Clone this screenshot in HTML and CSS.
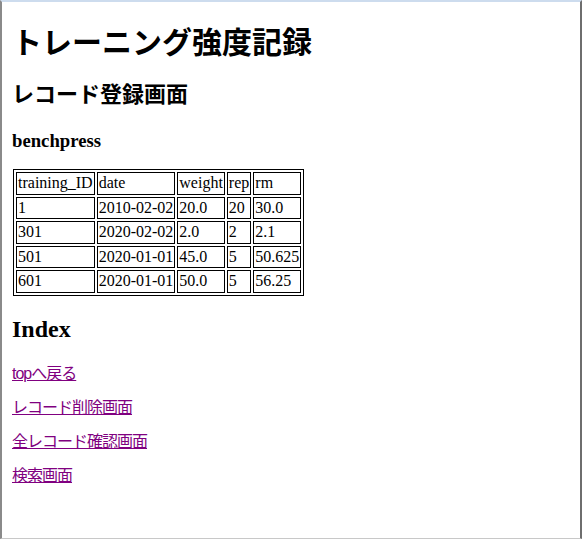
FILE: index.html
```html
<!DOCTYPE html>
<html lang="ja">
<head>
<meta charset="utf-8">
<title>トレーニング強度記録</title>
<link rel="stylesheet" href="styles.css">
</head>
<body>
<h1 class="title">トレーニング強度記録</h1>
<h2 class="subtitle">レコード登録画面</h2>
<h3 class="exercise">benchpress</h3>
<table class="records" border="1">
  <tr><td>training_ID</td><td>date</td><td>weight</td><td>rep</td><td>rm</td></tr>
  <tr><td>1</td><td>2010-02-02</td><td>20.0</td><td>20</td><td>30.0</td></tr>
  <tr><td>301</td><td>2020-02-02</td><td>2.0</td><td>2</td><td>2.1</td></tr>
  <tr><td>501</td><td>2020-01-01</td><td>45.0</td><td>5</td><td>50.625</td></tr>
  <tr><td>601</td><td>2020-01-01</td><td>50.0</td><td>5</td><td>56.25</td></tr>
</table>
<h2 class="index-title">Index</h2>
<p class="nav"><a href="#top">topへ戻る</a></p>
<p class="nav"><a href="#delete">レコード削除画面</a></p>
<p class="nav"><a href="#all">全レコード確認画面</a></p>
<p class="nav"><a href="#search">検索画面</a></p>
</body>
</html>
```
FILE: styles.css
```css
html {
  box-sizing: border-box;
  min-height: 100vh;
  border-top: 2px solid #cddcee;
  border-left: 2px solid #8a8a8a;
  border-right: 2px solid #6e6e6e;
  border-bottom: 1px solid #c8c8c8;
  background: #fff;
}
body {
  margin: 8px 8px 8px 10px;
  font-family: "Liberation Serif", "Noto Sans CJK JP", serif;
  font-size: 16px;
  color: #000;
}
.title, .subtitle {
  font-family: "Noto Sans CJK JP", sans-serif;
}
.title {
  font-size: 30px;
  margin: 12px 0 18px;
  line-height: 36px;
}
.subtitle {
  font-size: 22px;
  margin: 20px 0 18px;
  line-height: 28px;
}
.exercise {
  font-size: 18.72px;
  margin: 24px 0 17px;
}
.records {
  border-collapse: separate;
  border-spacing: 2px;
  border: 1px solid #000;
  margin-left: 1px;
}
.records td {
  border: 1px solid #000;
  padding: 1px;
  line-height: 18.6px;
}
.index-title {
  font-size: 24px;
  margin: 20px 0 22px;
}
.nav {
  margin: 16px 0;
  line-height: 18px;
  font-family: "Liberation Sans", "Noto Sans CJK JP", sans-serif;
}
.nav a {
  color: #800080;
  font-size: 16px;
  letter-spacing: -1px;
}
```
